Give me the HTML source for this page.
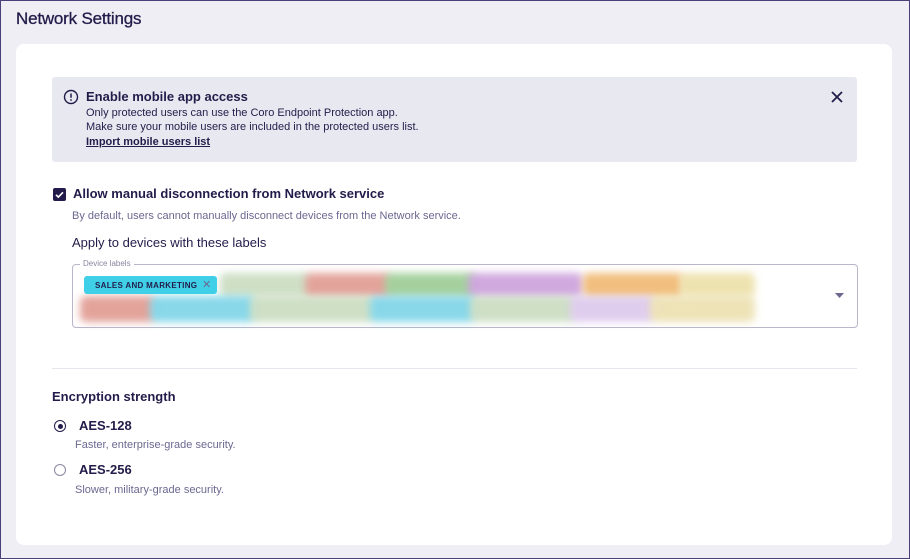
<!DOCTYPE html>
<html><head><style>
*{box-sizing:border-box;margin:0;padding:0}
body{width:910px;height:559px;overflow:hidden;background:#efeef4;font-family:"Liberation Sans",sans-serif;color:#231c4a;position:relative}
.frame{position:absolute;left:0;top:0;width:910px;height:559px;border:1px solid #4b3f7a;pointer-events:none}
.abs{position:absolute}
h1{position:absolute;left:16px;top:9px;font-size:17px;font-weight:normal;color:#231c4a;letter-spacing:-0.2px;-webkit-text-stroke:0.3px #231c4a}
.card{position:absolute;left:16px;top:44px;width:876px;height:501px;background:#fff;border-radius:8px}
.alert{position:absolute;left:52px;top:77px;width:805px;height:85px;background:#e8e8f0;border-radius:3px}
.t{position:absolute;white-space:nowrap}
.b{font-weight:bold}
.s{font-size:11px;color:#6b6890}
.blob{position:absolute;filter:blur(4px);border-radius:6px;opacity:.9}
</style></head><body>
<h1>Network Settings</h1>
<div class="card"></div>
<div class="alert"></div>
<svg class="abs" style="left:63px;top:89px" width="16" height="16" viewBox="0 0 16 16"><circle cx="8" cy="8" r="6.5" fill="none" stroke="#231c4a" stroke-width="1.4"/><path d="M8 4.5v4.3" stroke="#231c4a" stroke-width="1.5"/><circle cx="8" cy="11" r=".9" fill="#231c4a"/></svg>
<div class="t b" style="left:86px;top:89px;font-size:13px">Enable mobile app access</div>
<div class="t" style="left:86px;top:107px;font-size:11px;color:#231c4a">Only protected users can use the Coro Endpoint Protection app.</div>
<div class="t" style="left:86px;top:121px;font-size:11px;color:#231c4a">Make sure your mobile users are included in the protected users list.</div>
<div class="t b" style="left:86px;top:136px;font-size:11px;text-decoration:underline">Import mobile users list</div>
<svg class="abs" style="left:830px;top:90px" width="14" height="14" viewBox="0 0 14 14"><path d="M2 2L12 12M12 2L2 12" stroke="#231c4a" stroke-width="1.8"/></svg>
<div class="abs" style="left:53px;top:188px;width:13px;height:13px;background:#231c4a;border-radius:2px"></div>
<svg class="abs" style="left:53px;top:188px" width="13" height="13" viewBox="0 0 13 13"><path d="M3 6.8l2.3 2.3L10 4.3" stroke="#fff" stroke-width="1.6" fill="none"/></svg>
<div class="t b" style="left:73px;top:186px;font-size:13px">Allow manual disconnection from Network service</div>
<div class="t s" style="left:72px;top:210px">By default, users cannot manually disconnect devices from the Network service.</div>
<div class="t" style="left:72px;top:235px;font-size:13px">Apply to devices with these labels</div>
<div class="abs" style="left:72px;top:264px;width:786px;height:64px;border:1px solid #b8b6c8;border-radius:4px"></div>
<div class="t" style="left:80px;top:259px;font-size:8px;color:#8a879f;background:#fff;padding:0 3px">Device labels</div>
<div class="blob" style="left:220px;top:273px;width:90px;height:24px;background:#c9dcc0"></div>
<div class="blob" style="left:305px;top:273px;width:85px;height:24px;background:#e09a90"></div>
<div class="blob" style="left:385px;top:273px;width:90px;height:24px;background:#9ccc94"></div>
<div class="blob" style="left:468px;top:273px;width:115px;height:24px;background:#cca0dc"></div>
<div class="blob" style="left:583px;top:273px;width:100px;height:24px;background:#f0b870"></div>
<div class="blob" style="left:680px;top:273px;width:75px;height:24px;background:#ece0a8"></div>
<div class="blob" style="left:80px;top:296px;width:75px;height:26px;background:#e09a90"></div>
<div class="blob" style="left:150px;top:296px;width:105px;height:26px;background:#7cd4e8"></div>
<div class="blob" style="left:250px;top:296px;width:125px;height:26px;background:#c9dcc0"></div>
<div class="blob" style="left:370px;top:296px;width:105px;height:26px;background:#7cd4e8"></div>
<div class="blob" style="left:470px;top:296px;width:105px;height:26px;background:#c9dcc0"></div>
<div class="blob" style="left:570px;top:296px;width:85px;height:26px;background:#dcc8ec"></div>
<div class="blob" style="left:650px;top:296px;width:105px;height:26px;background:#ece0b0"></div>
<div class="abs" style="left:84px;top:276px;width:133px;height:18px;background:#3fd0e8;border-radius:3px"></div>
<div class="t b" style="left:95px;top:281px;font-size:8px;color:#231c4a;letter-spacing:.3px">SALES AND MARKETING</div>
<div class="t" style="left:202px;top:278px;font-size:11px;color:#6b6890">✕</div>
<svg class="abs" style="left:835px;top:293px" width="9" height="6"><path d="M0 0h9L4.5 5z" fill="#6b6890"/></svg>
<div class="abs" style="left:52px;top:368px;width:805px;height:1px;background:#e6e6ee"></div>
<div class="t b" style="left:52px;top:389px;font-size:13px">Encryption strength</div>
<div class="abs" style="left:54px;top:420px;width:12px;height:12px;border:1.5px solid #231c4a;border-radius:50%"></div>
<div class="abs" style="left:57.5px;top:423.5px;width:5px;height:5px;background:#231c4a;border-radius:50%"></div>
<div class="t b" style="left:79px;top:418px;font-size:13px">AES-128</div>
<div class="t s" style="left:75px;top:439px">Faster, enterprise-grade security.</div>
<div class="abs" style="left:54px;top:464px;width:12px;height:12px;border:1.2px solid #8a879f;border-radius:50%"></div>
<div class="t b" style="left:79px;top:462px;font-size:13px">AES-256</div>
<div class="t s" style="left:75px;top:484px">Slower, military-grade security.</div>
<div class="frame"></div>
</body></html>
